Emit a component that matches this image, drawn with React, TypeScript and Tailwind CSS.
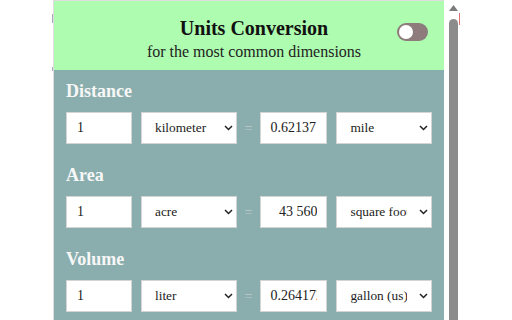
import React, {useState} from "react";

type Row = {
    title: string;
    from: string;
    fromUnit: string;
    to: string;
    toUnit: string;
    units: string[];
};

const rows: Row[] = [
    {title: "Distance", from: "1", fromUnit: "kilometer", to: "0.621371192", toUnit: "mile", units: ["kilometer", "meter", "mile", "foot", "inch"]},
    {title: "Area", from: "1", fromUnit: "acre", to: "43 560", toUnit: "square foot", units: ["acre", "hectare", "square foot", "square meter"]},
    {title: "Volume", from: "1", fromUnit: "liter", to: "0.264172052", toUnit: "gallon (us)", units: ["liter", "milliliter", "gallon (us)", "cup"]},
];

function UnitSelect({value, units}: { value: string; units: string[] }) {
    const [current, setCurrent] = useState(value);
    return (
        <div className="relative ml-[9px] h-[32px] w-[96px]">
            <select
                value={current}
                onChange={(e) => setCurrent(e.target.value)}
                className="h-full w-full appearance-none border border-[#d4d4d4] bg-white pl-[13px] pr-[24px] text-[13.33px] text-[#222] outline-none [font-family:'Liberation_Serif',serif]"
            >
                {units.map(u => <option key={u} value={u}>{u}</option>)}
            </select>
            <svg className="pointer-events-none absolute right-[4px] top-[13px]" width="9" height="6" viewBox="0 0 9 6">
                <path d="M1 1 L4.5 4.5 L8 1" fill="none" stroke="#222" strokeWidth="1.5"/>
            </svg>
        </div>
    );
}

function ConversionRow({row}: { row: Row }) {
    return (
        <div className="mb-[20px]">
            <h3 className="mb-[10px] text-[18px] leading-[22px] font-bold text-[#f7f7f7]">{row.title}</h3>
            <div className="flex items-center">
                <input
                    defaultValue={row.from}
                    className="h-[32px] w-[66px] border border-[#d4d4d4] bg-white px-[10px] text-[14px] text-[#222] outline-none [font-family:'Liberation_Serif',serif]"
                />
                <UnitSelect value={row.fromUnit} units={row.units}/>
                <span className="w-[24px] text-center text-[14px] text-[#c2caca]">=</span>
                <input
                    defaultValue={row.to}
                    className="h-[32px] w-[67px] border border-[#d4d4d4] bg-white px-[9px] text-right text-[14px] text-[#222] outline-none [font-family:'Liberation_Serif',serif]"
                />
                <UnitSelect value={row.toUnit} units={row.units}/>
            </div>
        </div>
    );
}

export default function App() {
    const [enabled, setEnabled] = useState(false);

    return (
        <div className="relative h-[320px] w-[512px] overflow-hidden bg-white [font-family:'Liberation_Serif',serif]">
            {/* window chrome bits on the left edge */}
            <div className="absolute left-[52px] top-[14px] h-[9px] w-[1px] bg-[#a4a8b8]"/>
            <div className="absolute left-[52px] top-[67px] h-[4px] w-[1px] bg-[#a4a8b8]"/>

            <div className="flex">
                <div className="w-[53px] shrink-0"/>

                <div className="w-[391px] shrink-0 border-l border-t border-[#dedede]">
                    <div className="relative h-[69px] bg-[#adfcaf] pl-[10px] pt-[15px] text-center">
                        <h1 className="text-[20px] leading-[24px] font-bold text-[#111]">Units Conversion</h1>
                        <p className="mt-[2px] text-[16px] leading-[20px] text-[#222]">for the most common dimensions</p>
                        <button
                            onClick={() => setEnabled(!enabled)}
                            className={`absolute right-[16px] top-[22px] flex h-[18px] w-[31px] items-center rounded-full bg-[#8e7b7b] px-[2px] ${enabled ? "justify-end" : "justify-start"}`}
                        >
                            <span className="h-[14px] w-[14px] rounded-full bg-white"/>
                        </button>
                    </div>

                    <div className="h-[251px] bg-[#8aadad] px-[12px] pt-[10px]">
                        {rows.map(r => <ConversionRow key={r.title} row={r}/>)}
                    </div>
                </div>

                {/* scrollbar */}
                <div className="flex w-[15px] shrink-0 flex-col items-center pl-[3px] pt-[5px]">
                    <svg width="9" height="6" viewBox="0 0 9 6">
                        <path d="M0 6 L4.5 0 L9 6 Z" fill="#7c7c7c"/>
                    </svg>
                    <div className="mt-[8px] h-[320px] w-[9px] rounded-t-full bg-[#8c8c8c]"/>
                </div>
                <div className="mt-[13px] h-[12px] w-[1px] bg-[#e07070]"/>
            </div>
        </div>
    );
}
